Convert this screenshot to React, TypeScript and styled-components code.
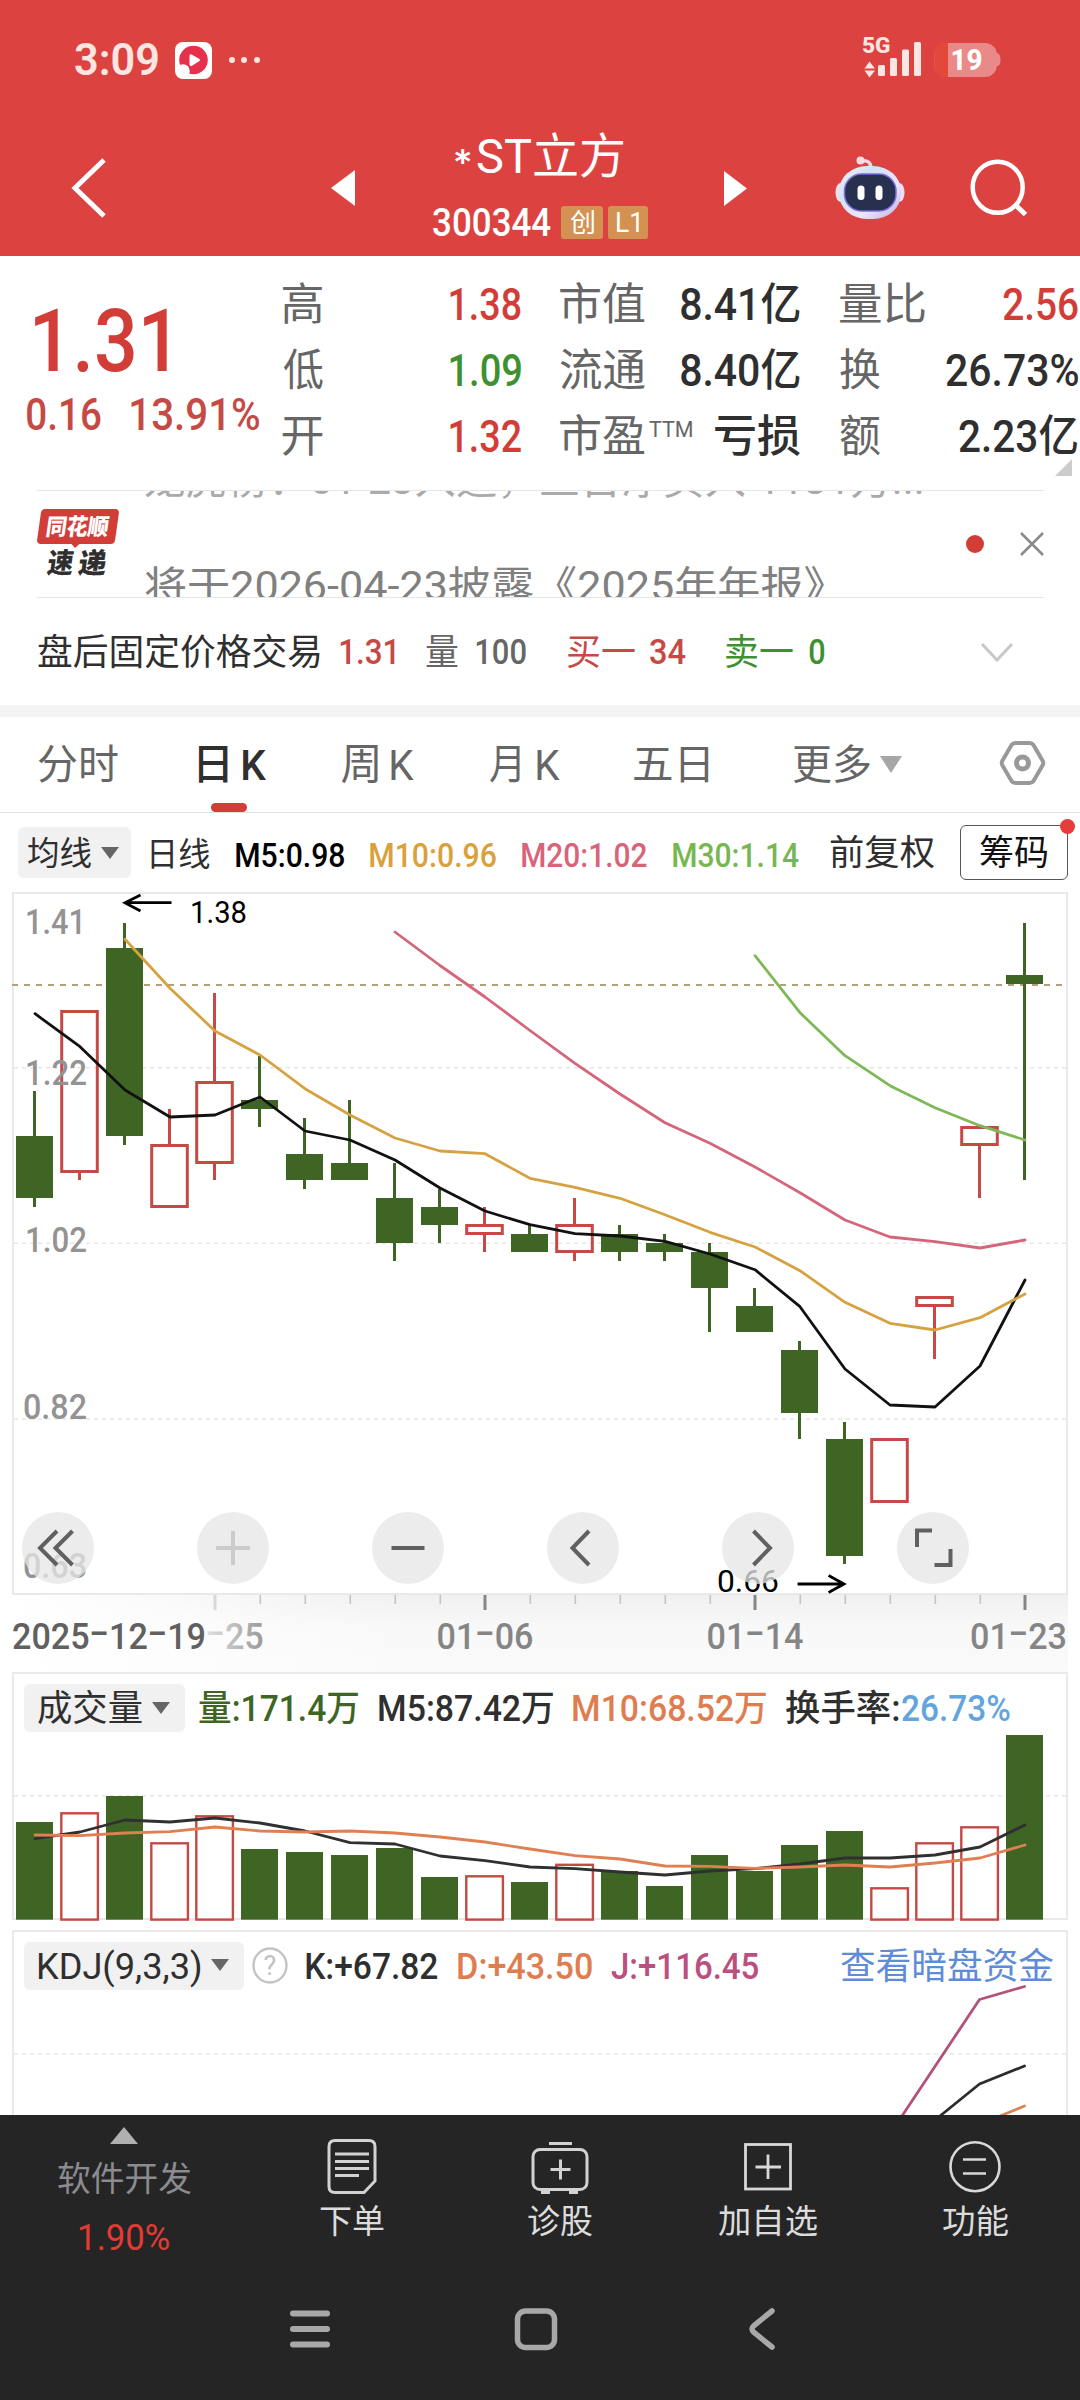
import React, { useLayoutEffect, useRef, useState } from 'react';
import styled, { createGlobalStyle, css } from 'styled-components';

const FONT = 'Roboto, "Noto Sans CJK SC", sans-serif';
const RED = '#d23d38';
const GREEN = '#3f6524';
const UP = '#c54a46';

const Global = createGlobalStyle`
  * { box-sizing: border-box; }
  html, body { margin: 0; padding: 0; background: #fff; }
  body { font-family: ${FONT}; width: 1080px; overflow-x: hidden; }
  svg { display: block; flex: none; }
  svg text { font-family: ${FONT}; }
`;

/* ---------- text that condenses to a given ink width ---------- */
interface TextProps { $w: number; $s: number; $c?: string; $wt?: number; $ml?: number; $dy?: number; $ff: string; }
const TextBox = styled.span<TextProps>`
  display: block;
  flex: none;
  width: ${p => p.$w}px;
  height: ${p => p.$s}px;
  line-height: ${p => p.$s}px;
  margin-left: ${p => p.$ml ?? 0}px;
  font-family: ${p => p.$ff};
  font-size: ${p => p.$s}px;
  font-weight: ${p => p.$wt ?? 400};
  color: ${p => p.$c ?? '#2f2f2f'};
  white-space: pre;
  transform: translateY(${p => p.$dy ?? 1}px);
`;
const Ink = styled.span`
  display: inline-block;
  transform-origin: 0 50%;
`;
interface FitProps { w: number; s: number; c?: string; wt?: number; ml?: number; dy?: number; ff?: string; children: string; }
function Fit({ w, s, c, wt, ml, dy, ff = FONT, children }: FitProps) {
  const ref = useRef<HTMLSpanElement>(null);
  const [fit, setFit] = useState({ k: 1, x: 0 });
  useLayoutEffect(() => {
    const ctx = document.createElement('canvas').getContext('2d');
    if (!ctx || !ref.current) return;
    ctx.font = `${wt ?? 400} ${s}px ${ff}`;
    const m = ctx.measureText(children);
    const ink = m.actualBoundingBoxLeft + m.actualBoundingBoxRight;
    const k = w / ink;
    setFit({ k, x: m.actualBoundingBoxLeft * k });
  }, [w, s, wt, ff, children]);
  return (
    <TextBox $w={w} $s={s} $c={c} $wt={wt} $ml={ml} $dy={dy} $ff={ff}>
      <Ink ref={ref} style={{ transform: `translateX(${fit.x}px) scaleX(${fit.k})` }}>{children}</Ink>
    </TextBox>
  );
}

/* ---------- layout pieces ---------- */
const Screen = styled.main`
  width: 1080px;
  height: 2400px;
  display: flex;
  flex-direction: column;
  background: #fff;
  overflow: hidden;
`;
const Row = styled.div<{ $h: number; $pl?: number; $mt?: number }>`
  display: flex;
  align-items: center;
  flex: none;
  height: ${p => p.$h}px;
  padding-left: ${p => p.$pl ?? 0}px;
  margin-top: ${p => p.$mt ?? 0}px;
`;
const Gap = styled.i<{ $w: number }>`flex: none; width: ${p => p.$w}px;`;

const Header = styled.header`
  height: 256px;
  flex: none;
  background: #dc4340;
`;
const TitleBlock = styled.div`
  width: 216px;
  height: 136px;
  margin-left: 77px;
  flex: none;
`;
const Badge = styled.span<{ $w: number; $ml: number }>`
  display: flex;
  align-items: center;
  justify-content: center;
  flex: none;
  width: ${p => p.$w}px;
  height: 33px;
  margin-left: ${p => p.$ml}px;
  border-radius: 3px;
  background: #d39252;
`;

const Quote = styled.section`
  display: flex;
  height: 234px;
  flex: none;
`;
const PriceCol = styled.div`width: 282.5px; flex: none;`;
const StatGrid = styled.div`
  display: flex;
  flex-direction: column;
  width: 797.5px;
  padding-top: 15px;
`;
const Corner = styled.i`
  align-self: flex-end;
  width: 0;
  height: 0;
  margin: -10px 8px 0 0;
  border-left: 17px solid transparent;
  border-bottom: 17px solid #ccc;
`;

const News = styled.section`
  display: flex;
  flex: none;
  height: 108px;
  margin: 0 36.5px 0 37px;
  border-top: 1px solid #e6e6e6;
  border-bottom: 1px solid #e6e6e6;
`;
const Logo = styled.div`
  width: 83px;
  flex: none;
  padding-top: 18px;
`;
const LogoPlate = styled.div`
  position: relative;
  display: flex;
  align-items: center;
  justify-content: center;
  height: 35px;
  margin: 0 3px 0 2px;
  border-radius: 4px;
  background: ${RED};
  transform: skewX(-8deg);
  &::after {
    content: '';
    position: absolute;
    left: 34px;
    top: 34px;
    border: 5.5px solid transparent;
    border-top-color: ${RED};
    border-bottom: 0;
  }
`;
const LogoSub = styled.div`
  display: flex;
  gap: 5px;
  padding: 5px 0 0 11px;
  transform: skewX(-8deg);
`;
const Ticker = styled.div`
  width: 800px;
  height: 106px;
  margin-left: 25px;
  overflow: hidden;
  display: flex;
  flex-direction: column;
  gap: 66px;
  & > :first-child { margin-top: -31px; }
`;
const Dot = styled.i<{ $d: number }>`
  width: ${p => p.$d}px;
  height: ${p => p.$d}px;
  flex: none;
  border-radius: 50%;
  background: ${RED};
`;
const NewsTail = styled.div`
  display: flex;
  align-items: center;
  gap: 36px;
  margin-left: 22.5px;
`;
const Band = styled.div`height: 12px; flex: none; background: #f4f4f4;`;

const Tabs = styled.nav`
  display: flex;
  height: 96px;
  flex: none;
  padding-left: 38px;
  border-bottom: 1px solid #e2e2e2;
`;
const Tab = styled.div<{ $ml?: number; $active?: boolean }>`
  position: relative;
  display: flex;
  align-items: center;
  height: 92px;
  margin-left: ${p => p.$ml ?? 0}px;
  ${p => p.$active && css`
    &::after {
      content: '';
      position: absolute;
      left: 12px;
      bottom: -3px;
      width: 36px;
      height: 9px;
      border-radius: 5px;
      background: ${RED};
    }
  `}
`;
const Caret = styled.i<{ $c?: string; $ml: number; $w?: number; $h?: number; $dy?: number }>`
  flex: none;
  width: 0;
  height: 0;
  margin-left: ${p => p.$ml}px;
  margin-top: ${p => p.$dy ?? 0}px;
  border-left: ${p => (p.$w ?? 18) / 2}px solid transparent;
  border-right: ${p => (p.$w ?? 18) / 2}px solid transparent;
  border-top: ${p => p.$h ?? 12}px solid ${p => p.$c ?? '#666'};
`;
const Pill = styled.div<{ $w: number; $h: number; $pl: number }>`
  display: flex;
  align-items: center;
  flex: none;
  width: ${p => p.$w}px;
  height: ${p => p.$h}px;
  padding-left: ${p => p.$pl}px;
  border-radius: 6px;
  background: #f1f1f1;
`;
const ChipButton = styled.div`
  position: relative;
  display: flex;
  align-items: center;
  justify-content: center;
  flex: none;
  width: 108px;
  height: 55px;
  margin-left: 26px;
  border: 1.5px solid #555;
  border-radius: 6px;
  & > i { position: absolute; right: -8px; top: -7px; background: #e53c3c; }
`;

const ChartArea = styled.section`
  position: relative;
  height: 703px;
  flex: none;
`;
const Controls = styled.div`
  position: absolute;
  left: 22px;
  bottom: 11px;
  display: flex;
  gap: 103px;
`;
const RoundButton = styled.button`
  display: flex;
  align-items: center;
  justify-content: center;
  width: 72px;
  height: 72px;
  padding: 0;
  border: 0;
  border-radius: 50%;
  background: rgba(230, 230, 230, 0.76);
`;
const Axis = styled.div`
  position: relative;
  height: 77px;
  flex: none;
  margin-right: 12px;
  background: linear-gradient(90deg, #fff 12px, rgba(255,255,255,0) 420px), linear-gradient(180deg, #f0f0f0, #f8f8f8 40%, #fafafa);
`;
const Panel = styled.section<{ $h: number; $mt?: number; $open?: boolean }>`
  flex: none;
  height: ${p => p.$h}px;
  margin: ${p => p.$mt ?? 0}px 12px 0;
  border: 2px solid #e9e9e9;
  ${p => p.$open && 'border-bottom: 0;'}
  svg { overflow: visible; }
`;

const Footer = styled.footer`
  height: 285px;
  flex: none;
  background: #252525;
`;
const Actions = styled.div`
  display: flex;
  height: 165px;
`;
const Action = styled.div<{ $w: number; $pt: number }>`
  display: flex;
  flex-direction: column;
  align-items: center;
  width: ${p => p.$w}px;
  padding-top: ${p => p.$pt}px;
`;
const SysNav = styled.div`
  display: flex;
  align-items: center;
  height: 98px;
  padding-left: 290px;
`;

/* ---------- market data (plot coordinates) ---------- */
const cx = (i: number) => 34.5 + 45 * i;
type Candle = [string, number, number, number, number];
const candles: Candle[] = [
  ['d', 1091, 1136, 1198, 1207], ['u', 1010, 1010, 1173, 1180], ['d', 923, 948, 1136, 1145],
  ['u', 1109, 1144, 1208, 1208], ['u', 993, 1081, 1164, 1180], ['d', 1056, 1100, 1109, 1127],
  ['d', 1118, 1154, 1180, 1189], ['d', 1100, 1163, 1180, 1180], ['d', 1163, 1198, 1243, 1261],
  ['d', 1189, 1207, 1225, 1243], ['u', 1207, 1224, 1235, 1252], ['d', 1225, 1234, 1252, 1252],
  ['u', 1198, 1224, 1253, 1261], ['d', 1225, 1234, 1252, 1261], ['d', 1234, 1243, 1252, 1261],
  ['d', 1243, 1252, 1288, 1332], ['d', 1288, 1306, 1332, 1332], ['d', 1341, 1350, 1413, 1439],
  ['d', 1422, 1439, 1556, 1564], ['u', 1438, 1438, 1503, 1503], ['u', 1296, 1296, 1307, 1359],
  ['u', 1126, 1126, 1146, 1198], ['d', 923, 975, 984, 1180],
];
const ma5 = [1013.7, 1046.7, 1090, 1117, 1115, 1097, 1131, 1140, 1160, 1188, 1211, 1224.7, 1233.7, 1236, 1241.3, 1254, 1269.7, 1306.7, 1369, 1405, 1407, 1366, 1280];
const ma10 = [939.3, 988.3, 1031, 1055, 1088.7, 1115, 1138, 1151, 1153.7, 1178.3, 1187.3, 1198.3, 1214.7, 1232.3, 1247, 1270.7, 1302.3, 1323.3, 1330, 1317.7, 1294];
const ma20 = [932, 965.5, 997, 1030.5, 1063.3, 1094, 1122.7, 1143.3, 1167, 1192.7, 1220, 1237, 1241.7, 1248, 1240];
const ma30 = [955.7, 1012.7, 1055.7, 1085.7, 1107.7, 1125.7, 1140];
const volTop = [1822, 1812, 1796, 1842, 1815, 1849, 1852, 1855, 1848, 1877, 1875, 1882, 1863.5, 1871, 1886, 1855, 1871, 1845, 1831, 1887, 1842, 1826, 1735];
const vol5 = [1838.7, 1832, 1820, 1822, 1818, 1823, 1831, 1842.7, 1844, 1856, 1860.7, 1867, 1868.7, 1872, 1875, 1871, 1868.7, 1864, 1858, 1858, 1855, 1847, 1825];
const vol10 = [1835, 1835.7, 1833, 1831.7, 1827, 1831, 1832, 1831, 1833, 1837, 1842, 1849, 1855.7, 1859, 1866, 1866.3, 1868.3, 1867, 1865, 1867, 1863, 1858, 1845];

function Line({ data, color, from = 0 }: { data: number[]; color: string; from?: number }) {
  return <polyline points={data.map((y, i) => `${cx(i + from) + 0.5},${y}`).join(' ')} fill="none" stroke={color} strokeWidth={2.8} strokeLinejoin="round" strokeLinecap="round" />;
}
function Grid({ y }: { y: number }) {
  return <line x1={14} x2={1066} y1={y} y2={y} stroke="#e6e6e6" strokeWidth={1.6} strokeDasharray="4 4" />;
}
function AxisText({ x, y, w, children, c = '#939393', s = 35.5, wt = 500 }: { x: number; y: number; w: number; children: string; c?: string; s?: number; wt?: number }) {
  return <text x={x - 2} y={y} textLength={w + 4} lengthAdjust="spacingAndGlyphs" fontSize={s} fontWeight={wt} fill={c}>{children}</text>;
}

/* A date set in equal cells, with the dash stretched over its cell. */
const CELL = 19.4;
function DateText({ x, children, c }: { x: number; children: string; c: string }) {
  let at = x - 1.5;
  return (
    <text y={1648.5} fontSize={36} fontWeight={500} fill={c}>
      {children.split(/(-)/).filter(Boolean).map((part, i) => {
        const start = at;
        const len = part.length * CELL;
        at += len;
        return (
          <tspan key={i} x={start} y={part === '-' ? 1645 : 1648.5} textLength={len} lengthAdjust="spacingAndGlyphs">{part}</tspan>
        );
      })}
    </text>
  );
}

function KChart() {
  return (
    <svg width="1080" height="703" viewBox="0 892 1080 703">
      <rect x="13" y="893" width="1054" height="701" fill="none" stroke="#e9e9e9" strokeWidth="2" />
      {[1067.7, 1243.3, 1419].map(y => <Grid key={y} y={y} />)}
      <line x1="12" x2="1066" y1="985" y2="985" stroke="#b3a078" strokeWidth="1.8" strokeDasharray="6 6" />
      {candles.map(([t, h, a, b, l], i) => t === 'd' ? (
        <g key={i} fill={GREEN}>
          <rect x={cx(i) - 1.5} y={h} width={3} height={l - h} />
          <rect x={cx(i) - 18.5} y={a} width={37} height={b - a} />
        </g>
      ) : (
        <g key={i} stroke={UP} strokeWidth={3} fill="none">
          {h < a && <line x1={cx(i)} x2={cx(i)} y1={h} y2={a} />}
          {l > b && <line x1={cx(i)} x2={cx(i)} y1={b} y2={l} />}
          <rect x={cx(i) - 17.8} y={a + 1.5} width={35.6} height={b - a - 3} />
        </g>
      ))}
      <AxisText x={27} y={934} w={57}>1.41</AxisText>
      <AxisText x={27} y={1085} w={58}>1.22</AxisText>
      <AxisText x={27} y={1252} w={58}>1.02</AxisText>
      <AxisText x={25} y={1419} w={60}>0.82</AxisText>
      <AxisText x={25} y={1578} w={60}>0.63</AxisText>
      <Line data={ma5} color="#111" />
      <Line data={ma10} from={2} color="#d6a241" />
      <Line data={ma20} from={8} color="#d4657a" />
      <Line data={ma30} from={16} color="#7fb857" />
      <g fill="none" stroke="#000" strokeWidth="2.8">
        <path d="M171.5 902.7H125M140.5 895L125 902.7L140.5 911" />
        <path d="M797.6 1584H844M828.6 1575.5L844 1584L828.6 1592.5" />
      </g>
      <AxisText x={192} y={923} w={53} c="#000" s={31.5} wt={400}>1.38</AxisText>
      <AxisText x={719} y={1592} w={58} c="#000" s={31.5} wt={400}>0.66</AxisText>
    </svg>
  );
}

const controlIcons: [string, string][] = [
  ['M35 20L18 37L35 54M50.500 20L33.500 37L50.500 54', '#606060'],
  ['M19 37H53M36 20V54', '#cbcbcb'],
  ['M19.500 37H52.500', '#606060'],
  ['M42 20L25.500 37L42 54', '#606060'],
  ['M31.500 20L48 37L31.500 54', '#606060'],
  ['M20 36V19.500H35M37.500 54H53.500V38', '#606060'],
];

function AxisBar() {
  return (
    <Axis>
      <svg width="1068" height="77" viewBox="0 1595 1068 77">
        <defs>
          <linearGradient id="fade" gradientUnits="userSpaceOnUse" x1="208" x2="264" y1="0" y2="0">
            <stop offset="0" stopColor="#dedede" />
            <stop offset="1" stopColor="#999" />
          </linearGradient>
        </defs>
        {candles.map((_, i) => i >= 4 && (i % 6 === 4
          ? <rect key={i} x={cx(i) - 1} y={1595} width={3} height={15} fill={i === 4 ? '#d8d8d8' : '#858585'} />
          : <rect key={i} x={cx(i)} y={1595} width={1.6} height={9} fill="#c4c4c4" />))}
        <DateText x={13.5} c="#606060">2025-12-19</DateText>
        <DateText x={207} c="url(#fade)">-25</DateText>
        <DateText x={438} c="#858585">01-06</DateText>
        <DateText x={708} c="#858585">01-14</DateText>
        <DateText x={971.5} c="#858585">01-23</DateText>
      </svg>
    </Axis>
  );
}

function VolumePanel() {
  return (
    <Panel $h={248}>
      <Row $h={48} $mt={10} $pl={10}>
        <Pill $w={161} $h={48} $pl={14}>
          <Fit w={104} s={36}>成交量</Fit>
          <Caret $ml={10} />
        </Pill>
        <Fit ml={14} w={159} s={36} c={GREEN} wt={500}>量:171.4万</Fit>
        <Fit ml={20.5} w={174} s={36} wt={500}>M5:87.42万</Fit>
        <Fit ml={20} w={193} s={36} c="#e07d50" wt={500}>M10:68.52万</Fit>
        <Fit ml={20} w={113} s={36} wt={500}>换手率:</Fit>
        <Fit ml={3} w={107.5} s={36} c="#62a5dc" wt={500}>26.73%</Fit>
      </Row>
      <svg width="1052" height="186" viewBox="14 1732 1052 186">
        <Grid y={1795.7} />
        {volTop.map((t, i) => candles[i][0] === 'd'
          ? <rect key={i} x={cx(i) - 18.5} y={t} width={37} height={1919.7 - t} fill={GREEN} />
          : <rect key={i} x={cx(i) - 18.2} y={t + 1.3} width={36.6} height={1918.3 - t} fill="#fff" stroke={UP} strokeWidth={2.4} />)}
        <Line data={vol5} color="#303030" />
        <Line data={vol10} color="#df8052" />
      </svg>
    </Panel>
  );
}

function KdjPanel() {
  return (
    <Panel $h={185} $mt={10} $open>
      <Row $h={48} $mt={10} $pl={10}>
        <Pill $w={220} $h={48} $pl={14}>
          <Fit w={162} s={36}>KDJ(9,3,3)</Fit>
          <Caret $ml={11} $dy={-2} />
        </Pill>
        <Gap $w={8} />
        <svg width="36" height="38" viewBox="0 0 36 38">
          <ellipse cx="18" cy="18.500" rx="16.500" ry="17" fill="none" stroke="#c4c4c4" strokeWidth="2.400" />
          <text x="18" y="28" textAnchor="middle" fontSize="27" fill="#c0c0c0">?</text>
        </svg>
        <Fit ml={18} w={132} s={36} wt={500}>K:+67.82</Fit>
        <Fit ml={20} w={134} s={36} c="#e07d50" wt={500}>D:+43.50</Fit>
        <Fit ml={19} w={147} s={36} c="#bb4f7e" wt={500}>J:+116.45</Fit>
        <Fit ml={83} w={212} s={36} c="#5e8cd6">查看暗盘资金</Fit>
      </Row>
      <svg width="1052" height="125" viewBox="14 1990 1052 125">
        <Grid y={2054} />
        <g fill="none" strokeWidth="2.800" strokeLinejoin="round" strokeLinecap="round">
          <path d="M902 2116L979.500 1999.500L1024.500 1986.500" stroke="#b4517a" />
          <path d="M940 2116L979.500 2084L1024.500 2066" stroke="#2c2c2c" />
          <path d="M1000 2116L1024.500 2106" stroke="#d88455" />
        </g>
      </svg>
    </Panel>
  );
}

function StatusBar() {
  return (
    <Row $h={120} $pl={75}>
      <Fit w={83} s={43.500} c="#fde6e1" wt={600}>3:09</Fit>
      <Gap $w={17} />
      <svg width="37" height="37" viewBox="0 0 37 37">
        <rect width="37" height="37" rx="8" fill="#fff" />
        <circle cx="18.500" cy="18" r="14.300" fill="#e7304c" />
        <circle cx="8" cy="29" r="6.800" fill="#fff" />
        <path d="M14.500 14Q14.500 11.500 17 12.800L24 16.800Q26 18 24 19.300L17.500 23.500Q14.500 25 14.500 22Z" fill="#fff" />
      </svg>
      <Gap $w={17} />
      <svg width="32" height="8" viewBox="0 0 32 8" fill="#fde6e1">
        <circle cx="3" cy="4" r="3" /><circle cx="15" cy="4" r="3" /><circle cx="28" cy="4" r="3" />
      </svg>
      <Gap $w={599} />
      <svg width="62" height="66" viewBox="860 27 62 66" fill="#fde6e1">
        <text x="862" y="53.300" fontSize="22.500" fontWeight="800" textLength="28.500" lengthAdjust="spacingAndGlyphs">5G</text>
        <path d="M869.500 61.500L875 68.500H864.500ZM869.500 77.500L875 70.500H864.500Z" />
        <rect x="878" y="65" width="7" height="11" rx="1.500" /><rect x="890" y="58" width="7" height="18" rx="1.500" />
        <rect x="902" y="49.500" width="7" height="26.500" rx="1.500" /><rect x="914" y="42" width="7" height="34" rx="1.500" />
      </svg>
      <Gap $w={12} />
      <svg width="68" height="36" viewBox="934 41 68 36">
        <path d="M995 52H997Q1000.500 53 1000.500 59T997 65H995Z" fill="#ea8a88" />
        <rect x="934.500" y="42" width="62.500" height="34" rx="12" fill="#ea8a88" />
        <path d="M948 42H946.500Q934.500 42 934.500 54V64Q934.500 76 946.500 76H948Z" fill="#e3493a" />
        <text x="950.500" y="69.300" fontSize="30" fontWeight="800" fill="#fff" textLength="32" lengthAdjust="spacingAndGlyphs">19</text>
      </svg>
    </Row>
  );
}

function TitleBar() {
  return (
    <Row $h={136} $pl={70}>
      <svg width="40" height="66" viewBox="70 153 40 66">
        <path d="M104 158L75 186L104 214" fill="none" stroke="#fff" strokeWidth="5" />
      </svg>
      <Gap $w={221} />
      <svg width="24" height="36" viewBox="0 0 24 36"><path d="M0 18L24 0V36Z" fill="#fff" /></svg>
      <TitleBlock>
        <Row $h={70} $pl={23}>
          <Fit w={16} s={44} c="#fff" wt={700} dy={10} ff="Lato, sans-serif">*</Fit>
          <Fit ml={6} w={146} s={48} c="#fff" dy={2}>ST立方</Fit>
        </Row>
        <Row $h={64}>
          <Fit ml={1} w={118} s={39} c="#fff" wt={500}>300344</Fit>
          <Badge $w={42} $ml={10}><Fit w={24} s={26} c="#fff">创</Fit></Badge>
          <Badge $w={40} $ml={5}><Fit w={22} s={27} c="#fff">L1</Fit></Badge>
        </Row>
      </TitleBlock>
      <Gap $w={76} />
      <svg width="23" height="35" viewBox="0 0 23 35"><path d="M23 17.500L0 0V35Z" fill="#fff" /></svg>
      <Gap $w={87} />
      <svg width="74" height="68" viewBox="834 152 74 68">
        <defs>
          <linearGradient id="shell" x1="0" y1="0" x2="1" y2="1">
            <stop offset="0" stopColor="#fdf0f6" /><stop offset="0.300" stopColor="#cfe3f4" /><stop offset="0.650" stopColor="#efe4fb" /><stop offset="1" stopColor="#b3aee8" />
          </linearGradient>
        </defs>
        <path d="M861 159Q871 157 871 167" fill="none" stroke="#f4d8e2" strokeWidth="3.500" />
        <circle cx="860.500" cy="158.500" r="4" fill="#f8dde4" />
        <ellipse cx="840.500" cy="190.500" rx="5" ry="9.500" fill="#f5dfeb" />
        <ellipse cx="899.500" cy="190.500" rx="5" ry="9.500" fill="#ecdff5" />
        <rect x="839" y="164" width="62" height="53" rx="28" ry="25" fill="url(#shell)" />
        <rect x="844.500" y="172" width="51.500" height="37" rx="17" fill="#27304e" stroke="#7a6bd8" strokeWidth="1.500" />
        <rect x="857.500" y="183.500" width="7" height="14.500" rx="3.500" fill="#fff" />
        <rect x="875.500" y="183.500" width="7" height="14.500" rx="3.500" fill="#fff" />
      </svg>
      <Gap $w={60} />
      <svg width="62" height="62" viewBox="968 157 62 62" fill="none" stroke="#fff" strokeWidth="4.500">
        <ellipse cx="997.700" cy="187.300" rx="25" ry="25.500" />
        <path d="M1015.500 205L1025.500 214.500" strokeWidth="5" />
      </svg>
    </Row>
  );
}

const LBL = '#666';
function Stats() {
  return (
    <StatGrid>
      <Row $h={66}>
        <Fit w={40} s={44} c={LBL}>高</Fit><Fit ml={127.500} w={71} s={44.500} c={RED} wt={500}>1.38</Fit>
        <Fit ml={39} w={85} s={44} c={LBL}>市值</Fit><Fit ml={35.500} w={119} s={44.500} wt={500}>8.41亿</Fit>
        <Fit ml={40} w={85} s={44} c={LBL}>量比</Fit><Fit ml={78.500} w={75} s={44.500} c={RED} wt={500}>2.56</Fit>
      </Row>
      <Row $h={66}>
        <Fit w={40} s={44} c={LBL}>低</Fit><Fit ml={127.500} w={71} s={44.500} c="#3d9130" wt={500}>1.09</Fit>
        <Fit ml={39} w={85} s={44} c={LBL}>流通</Fit><Fit ml={35.500} w={119} s={44.500} wt={500}>8.40亿</Fit>
        <Fit ml={40} w={40} s={44} c={LBL}>换</Fit><Fit ml={66.500} w={132} s={44.500} wt={500}>26.73%</Fit>
      </Row>
      <Row $h={66}>
        <Fit w={40} s={44} c={LBL}>开</Fit><Fit ml={127.500} w={71} s={44.500} c={RED} wt={500}>1.32</Fit>
        <Fit ml={39} w={85} s={44} c={LBL}>市盈</Fit><Fit ml={4} w={43} s={22.500} c={LBL} dy={-7}>TTM</Fit>
        <Fit ml={22.500} w={85} s={44} wt={500}>亏损</Fit>
        <Fit ml={40} w={40} s={44} c={LBL}>额</Fit><Fit ml={79.500} w={118.500} s={44.500} wt={500}>2.23亿</Fit>
      </Row>
      <Corner />
    </StatGrid>
  );
}

export default function App() {
  return (
    <Screen>
      <Global />
      <Header><StatusBar /><TitleBar /></Header>

      <Quote>
        <PriceCol>
          <Row $h={88} $mt={40} $pl={34.500}><Fit w={132} s={87} c={RED} wt={500}>1.31</Fit></Row>
          <Row $h={60} $pl={26.500}>
            <Fit w={74} s={44} c={UP} wt={500}>0.16</Fit>
            <Fit ml={30} w={128.500} s={44} c={UP} wt={500}>13.91%</Fit>
          </Row>
        </PriceCol>
        <Stats />
      </Quote>

      <News>
        <Logo>
          <LogoPlate><Fit w={62} s={23} c="#fff" wt={900}>同花顺</Fit></LogoPlate>
          <LogoSub><Fit w={26} s={28} wt={900}>速</Fit><Fit w={28} s={28} wt={900}>递</Fit></LogoSub>
        </Logo>
        <Ticker>
          <Fit w={777} s={40} c="#aaa">龙虎榜：01-23入选，三日净买入-1131万...</Fit>
          <Fit w={679} s={40} c="#808080">将于2026-04-23披露《2025年年报》</Fit>
        </Ticker>
        <NewsTail>
          <Dot $d={18} />
          <svg width="24" height="24" viewBox="0 0 24 24"><path d="M1 1L23 23M23 1L1 23" stroke="#8a8a8a" strokeWidth="2.500" /></svg>
        </NewsTail>
      </News>

      <Row $h={107} $pl={38}>
        <Fit w={282} s={36}>盘后固定价格交易</Fit>
        <Fit ml={20} w={55} s={35.500} c={UP} wt={500}>1.31</Fit>
        <Fit ml={31} w={32} s={36} c={LBL}>量</Fit><Fit ml={18} w={50} s={35.500} c={LBL} wt={500}>100</Fit>
        <Fit ml={41} w={68} s={36} c={UP}>买一</Fit><Fit ml={15} w={36} s={35.500} c={UP} wt={500}>34</Fit>
        <Fit ml={40} w={67} s={36} c="#3d9130">卖一</Fit><Fit ml={16} w={15.500} s={35.500} c="#3d9130" wt={500}>0</Fit>
        <Gap $w={155} />
        <svg width="34" height="22" viewBox="0 0 34 22"><path d="M2 3L17 19L32 3" fill="none" stroke="#c8c8c8" strokeWidth="3" /></svg>
      </Row>
      <Band />

      <Tabs>
        <Tab><Fit w={80} s={41} c={LBL} dy={2}>分时</Fit></Tab>
        <Tab $ml={81} $active><Fit w={29} s={42} wt={500} dy={2}>日</Fit><Fit ml={15} w={23.500} s={43} wt={500} dy={2}>K</Fit></Tab>
        <Tab $ml={75}><Fit w={36} s={42} c={LBL} dy={2}>周</Fit><Fit ml={13} w={22.500} s={43} c={LBL} dy={2}>K</Fit></Tab>
        <Tab $ml={77}><Fit w={30} s={42} c={LBL} dy={2}>月</Fit><Fit ml={17} w={22.500} s={43} c={LBL} dy={2}>K</Fit></Tab>
        <Tab $ml={74.500}><Fit w={75} s={41} c={LBL} dy={2}>五日</Fit></Tab>
        <Tab $ml={84}><Fit w={77} s={41} c={LBL} dy={2}>更多</Fit><Caret $ml={10} $w={22} $h={17} $c="#a6a6a6" $dy={2} /></Tab>
        <Tab $ml={97}>
          <svg width="47" height="46" viewBox="0 0 47 46" fill="none" stroke="#999">
            <path d="M3.500 20.500L12.500 5Q14 3 16.500 3H30.500Q33 3 34.500 5L43.500 20.500Q45 23 43.500 25.500L34.500 41Q33 43 30.500 43H16.500Q14 43 12.500 41L3.500 25.500Q2 23 3.500 20.500Z" strokeWidth="4" />
            <circle cx="23.500" cy="23" r="6" strokeWidth="5" />
          </svg>
        </Tab>
      </Tabs>

      <Row $h={79} $pl={18}>
        <Pill $w={113} $h={51} $pl={10}><Fit w={63} s={33}>均线</Fit><Caret $ml={10} /></Pill>
        <Fit ml={19.500} w={59} s={32.500} dy={3}>日线</Fit>
        <Fit ml={26.500} w={108.500} s={33.500} c="#000" wt={500} dy={3}>M5:0.98</Fit>
        <Fit ml={25.500} w={126} s={33.500} c="#d9a13c" wt={500} dy={3}>M10:0.96</Fit>
        <Fit ml={26} w={124.500} s={33.500} c="#d9637a" wt={500} dy={3}>M20:1.02</Fit>
        <Fit ml={26} w={126} s={33.500} c="#77b750" wt={500} dy={3}>M30:1.14</Fit>
        <Fit ml={31} w={104} s={35}>前复权</Fit>
        <ChipButton><Fit w={67} s={35} c="#111">筹码</Fit><Dot $d={15} /></ChipButton>
      </Row>

      <ChartArea>
        <KChart />
        <Controls>
          {controlIcons.map(([d, c], i) => (
            <RoundButton key={i}>
              <svg width="72" height="74" viewBox="0 0 72 74"><path d={d} fill="none" stroke={c} strokeWidth="4" /></svg>
            </RoundButton>
          ))}
        </Controls>
      </ChartArea>
      <AxisBar />
      <VolumePanel />
      <KdjPanel />

      <Footer>
        <Actions>
          <Action $w={248} $pt={12}>
            <svg width="28" height="17" viewBox="0 0 28 17"><path d="M14 0L28 17H0Z" fill="#b0b0b0" /></svg>
            <Row $h={68}><Fit w={133} s={34} c="#8b8b90">软件开发</Fit></Row>
            <Row $h={50}><Fit w={89} s={36} c="#e23b34">1.90%</Fit></Row>
          </Action>
          <Action $w={208} $pt={24}>
            <svg width="50" height="56" viewBox="0 0 50 56" fill="none" stroke="#d2d2d2" strokeWidth="3">
              <path d="M8 1.500H42Q48 1.500 48 7.500V42L37 53.500H8Q2 53.500 2 47.500V7.500Q2 1.500 8 1.500Z" />
              <path d="M8 15H42M8 22.500H42M8 29.500H42M8 36.500H32" />
            </svg>
            <Row $h={50}><Fit w={64} s={33} c="#dcdcdc">下单</Fit></Row>
          </Action>
          <Action $w={208} $pt={24}>
            <svg width="58" height="56" viewBox="0 0 58 56" fill="none" stroke="#d2d2d2" strokeWidth="3">
              <path d="M18 4.500H41" />
              <rect x="2" y="10.500" width="54" height="40" rx="7" />
              <path d="M19.500 30.500H39.500M29.500 20.500V40.500" />
              <path d="M10 53H19M38 53H47" strokeWidth="4" />
            </svg>
            <Row $h={50}><Fit w={64} s={33} c="#dcdcdc">诊股</Fit></Row>
          </Action>
          <Action $w={207} $pt={24}>
            <svg width="50" height="56" viewBox="0 0 50 56" fill="none" stroke="#d8d8d8" strokeWidth="2.800">
              <rect x="2.500" y="5.500" width="45" height="44.500" />
              <path d="M12.500 28H38M25 15.500V40" />
            </svg>
            <Row $h={50}><Fit w={99} s={33} c="#dcdcdc">加自选</Fit></Row>
          </Action>
          <Action $w={208} $pt={24}>
            <svg width="54" height="56" viewBox="0 0 54 56" fill="none" stroke="#d8d8d8" strokeWidth="2.600">
              <circle cx="27" cy="27.700" r="24.500" />
              <path d="M15 20.500H38M15 34.500H38" />
            </svg>
            <Row $h={50}><Fit w={65} s={33} c="#dcdcdc">功能</Fit></Row>
          </Action>
        </Actions>
        <SysNav>
          <svg width="40" height="40" viewBox="0 0 40 40" stroke="#a8a8a8" strokeWidth="6" strokeLinecap="round"><path d="M3 4.500H37M3 20H37M3 35.500H37" /></svg>
          <Gap $w={184} />
          <svg width="44" height="44" viewBox="0 0 44 44" fill="none" stroke="#a8a8a8" strokeWidth="5.500"><rect x="3.500" y="4" width="37" height="36.500" rx="8" /></svg>
          <Gap $w={189} />
          <svg width="30" height="44" viewBox="0 0 30 44" fill="none" stroke="#a8a8a8" strokeWidth="5.500" strokeLinecap="round"><path d="M25 4L7 18.500Q3 22 7 25.500L25 40" /></svg>
        </SysNav>
      </Footer>
    </Screen>
  );
}
